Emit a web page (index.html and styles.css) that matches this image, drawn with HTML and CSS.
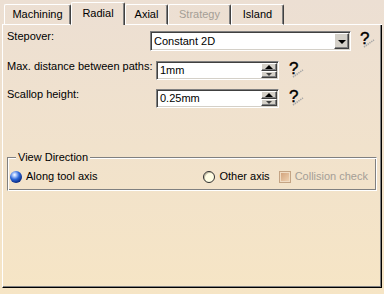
FILE: index.html
```html
<!DOCTYPE html>
<html>
<head>
<meta charset="utf-8">
<link rel="stylesheet" href="styles.css">
</head>
<body>
<div class="window">
  <div class="tabs">
    <span class="tab-edge"></span>
    <div class="tab tab-machining">Machining</div>
    <div class="tab tab-radial is-active">Radial</div>
    <div class="tab tab-axial">Axial</div>
    <div class="tab tab-strategy is-disabled">Strategy</div>
    <div class="tab tab-island">Island</div>
    <span class="tab-fill"></span>
  </div>
  <div class="panel">
    <div class="row row-stepover">
      <span class="label label-stepover">Stepover:</span>
      <div class="combo">
        <span class="combo-text">Constant 2D</span>
        <span class="combo-btn"><span class="tri-down"></span></span>
      </div>
      <span class="help help-combo">?<svg class="help-tail" width="12" height="10" viewBox="0 0 12 10"><line x1="1" y1="9" x2="11" y2="2" stroke="#a8a8a8" stroke-width="1.6" stroke-dasharray="1.4 0.8"/></svg></span>
    </div>
    <div class="row row-dist">
      <span class="label label-field">Max. distance between paths:</span>
      <div class="field">
        <span class="field-text">1mm</span>
        <span class="spin">
          <span class="spin-btn"><span class="tri-up"></span></span>
          <span class="spin-btn"><span class="tri-down-small"></span></span>
        </span>
      </div>
      <span class="help help-field">?<svg class="help-tail" width="12" height="10" viewBox="0 0 12 10"><line x1="1" y1="9" x2="11" y2="2" stroke="#a8a8a8" stroke-width="1.6" stroke-dasharray="1.4 0.8"/></svg></span>
    </div>
    <div class="row row-scallop">
      <span class="label label-field">Scallop height:</span>
      <div class="field">
        <span class="field-text">0.25mm</span>
        <span class="spin">
          <span class="spin-btn"><span class="tri-up"></span></span>
          <span class="spin-btn"><span class="tri-down-small"></span></span>
        </span>
      </div>
      <span class="help help-field">?<svg class="help-tail" width="12" height="10" viewBox="0 0 12 10"><line x1="1" y1="9" x2="11" y2="2" stroke="#a8a8a8" stroke-width="1.6" stroke-dasharray="1.4 0.8"/></svg></span>
    </div>
    <div class="group">
      <div class="group-head">
        <span class="gl gl-l"></span>
        <span class="legend">View Direction</span>
        <span class="gl gl-r"></span>
      </div>
      <div class="group-body">
        <span class="opt"><span class="radio radio-on"></span>Along tool axis</span>
        <span class="opts-right">
          <span class="opt"><span class="radio radio-off"></span>Other axis</span>
          <span class="opt opt-disabled"><span class="check"></span>Collision check</span>
        </span>
      </div>
    </div>
  </div>
</div>
</body>
</html>
```
FILE: styles.css
```css
html, body {
  margin: 0;
  width: 384px;
  height: 294px;
  overflow: hidden;
}
body {
  background: linear-gradient(#ecdfd3, #f6e5c5);
  font: 11px/13px "Liberation Sans", Arial, sans-serif;
  color: #000;
}
.window {
  padding: 0 2px;
}

/* tabs */
.tabs {
  display: flex;
  align-items: flex-end;
  height: 25px;
}
.tab-edge {
  width: 2px;
  height: 0;
  border-bottom: 1px solid #fff;
}
.tab-fill {
  flex: 1;
  height: 0;
  border-bottom: 1px solid #fff;
}
.tab {
  box-sizing: border-box;
  height: 21px;
  padding-top: 3px;
  text-align: center;
  border: 1px solid #fff;
  border-right-color: #404040;
  border-radius: 2px 2px 0 0;
  box-shadow: inset -1px 0 #808080;
}
.tab.is-active {
  height: 23px;
  padding-top: 4px;
  border-bottom: none;
}
.tab.is-disabled { color: #a49e96; }
.tab-machining { width: 67px; }
.tab-radial { width: 54px; }
.tab-axial { width: 43px; }
.tab-strategy { width: 63px; }
.tab-island { width: 53px; }

/* panel */
.panel {
  box-sizing: border-box;
  height: 263px;
  padding: 6px 4px 0 4px;
  border-left: 1px solid #fff;
  border-right: 1px solid #000;
  border-bottom: 1px solid #000;
  box-shadow: inset -1px -1px #808080;
}
.row {
  display: flex;
  align-items: flex-start;
}
.row-dist { margin-top: 10px; }
.row-scallop { margin-top: 9px; }
.label { margin-top: -1px; }
.label-stepover { width: 143px; }
.label-field { width: 149px; }

/* combo */
.combo {
  box-sizing: border-box;
  width: 201px;
  height: 20px;
  padding: 1px;
  display: flex;
  background: #fff;
  border: 1px solid;
  border-color: #808080 #fff #fff #808080;
  box-shadow: inset 1px 1px #404040, inset -1px -1px #d4d0c8;
}
.combo-text {
  flex: 1;
  padding-left: 2px;
  line-height: 16px;
}
.combo-btn {
  box-sizing: border-box;
  width: 15px;
  height: 16px;
  display: flex;
  align-items: center;
  justify-content: center;
  background: #d4d0c8;
  border: 1px solid;
  border-color: #fff #404040 #404040 #fff;
  box-shadow: inset -1px -1px #808080;
}
.tri-down {
  width: 0;
  height: 0;
  border-left: 4px solid transparent;
  border-right: 4px solid transparent;
  border-top: 4px solid #000;
  margin: 1px 0 0 0;
}

/* fields */
.field {
  box-sizing: border-box;
  width: 123px;
  height: 19px;
  padding: 1px;
  display: flex;
  background: #fff;
  border: 1px solid;
  border-color: #808080 #fff #fff #808080;
  box-shadow: inset 1px 1px #404040, inset -1px -1px #d4d0c8;
}
.field-text {
  flex: 1;
  padding-left: 2px;
  line-height: 15px;
}
.spin {
  width: 16px;
  display: flex;
  flex-direction: column;
}
.spin-btn {
  box-sizing: border-box;
  flex: 1;
  display: flex;
  align-items: center;
  justify-content: center;
  background: #d4d0c8;
  border: 1px solid;
  border-color: #fff #404040 #404040 #fff;
  box-shadow: inset -1px -1px #808080;
}
.tri-up {
  width: 0;
  height: 0;
  border-left: 4px solid transparent;
  border-right: 4px solid transparent;
  border-bottom: 4px solid #000;
}
.tri-down-small {
  width: 0;
  height: 0;
  border-left: 3px solid transparent;
  border-right: 3px solid transparent;
  border-top: 3px solid #404040;
}

/* help */
.help {
  position: relative;
  width: 16px;
  height: 18px;
  font: 17px/16px "Liberation Sans", Arial, sans-serif;
  -webkit-text-stroke: 0.4px #000;
}
.help-combo { margin-left: 9px; }
.help-field { margin-left: 10px; }
.help-tail {
  position: absolute;
  left: 3px;
  top: 7px;
}

/* group */
.group {
  margin-top: 42px;
  width: 370px;
}
.group-head {
  display: flex;
  height: 14px;
}
.gl {
  box-sizing: border-box;
  align-self: flex-end;
  height: 7px;
  border-top: 1px solid #808080;
}
.gl-l {
  width: 9px;
  border-left: 1px solid #808080;
  box-shadow: inset 1px 1px #fff;
}
.gl-r {
  flex: 1;
  border-right: 1px solid #fff;
  box-shadow: inset 0 1px #fff, inset -1px 0 #808080;
}
.legend {
  padding: 0 2px;
  line-height: 14px;
}
.group-body {
  box-sizing: border-box;
  height: 27px;
  display: flex;
  align-items: center;
  padding: 0 8px 1px 2px;
  border-left: 1px solid #808080;
  border-right: 1px solid #fff;
  border-bottom: 1px solid #fff;
  box-shadow: inset 1px 0 #fff, inset -1px -1px #808080;
}
.opt {
  display: flex;
  align-items: center;
  gap: 4px;
}
.opts-right {
  margin-left: auto;
  display: flex;
  gap: 9px;
}
.opt-disabled { color: #a49e96; }
.radio {
  box-sizing: border-box;
  width: 12px;
  height: 12px;
  border-radius: 50%;
}
.radio-on {
  background: radial-gradient(circle at 38% 32%, #ffffff 0, #b8d0ff 14%, #2c66d8 42%, #0a2a82 74%, #030f38 100%);
}
.radio-off {
  border: 1px solid #2e2e2e;
  background: #fffde4;
  box-shadow: inset 1px 1px #c8c0a8;
}
.check {
  box-sizing: border-box;
  width: 12px;
  height: 12px;
  border: 1px solid #c4a484;
  background: linear-gradient(135deg, #cf9f78, #f2d6b6);
  box-shadow: inset 0 0 0 1px #f0dcc4;
}
```
